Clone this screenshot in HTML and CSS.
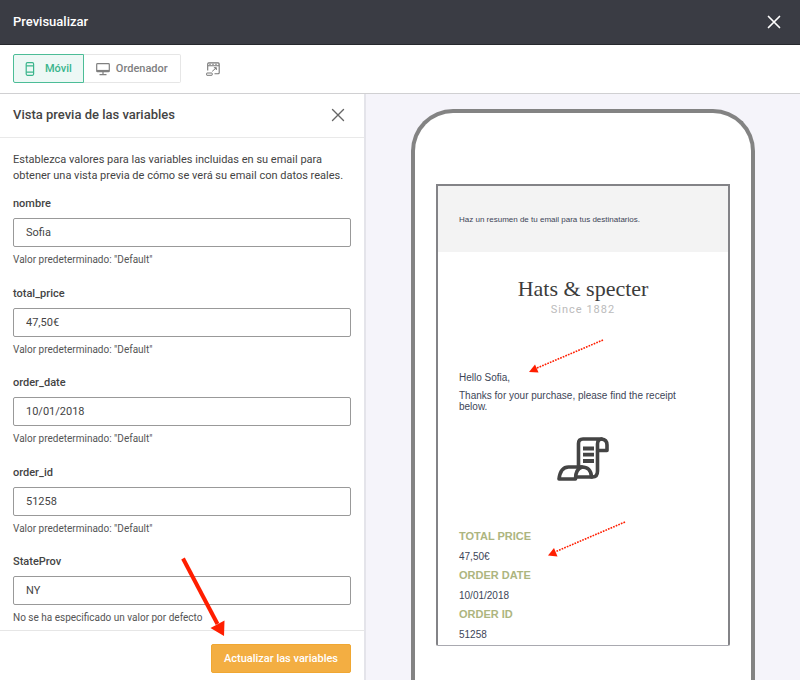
FILE: index.html
```html
<!DOCTYPE html>
<html lang="es">
<head>
<meta charset="utf-8">
<meta name="viewport" content="width=device-width, initial-scale=1">
<title>Previsualizar</title>
<link rel="stylesheet" href="styles.css">
</head>
<body>
<header class="topbar">
  <h1 class="title">Previsualizar</h1>
  <button class="close" type="button" aria-label="Cerrar">
    <svg width="14" height="14" viewBox="0 0 14 14"><path d="M1.500 1.500 12.500 12.500M12.500 1.500 1.500 12.500" fill="none" stroke="currentColor" stroke-width="1.700" stroke-linecap="round"/></svg>
  </button>
</header>

<nav class="toolbar">
  <div class="switch">
    <button class="tab tab-active" type="button">
      <svg width="10" height="14" viewBox="0 0 10 14"><g fill="none" stroke="currentColor" stroke-width="1.200"><rect x="1.200" y=".7" width="7.400" height="12.600" rx="1.200"/><path d="M1.200 3.800h7.400M1.200 10.200h7.400"/></g></svg>
      <span>Móvil</span>
    </button>
    <button class="tab" type="button">
      <svg width="14" height="14" viewBox="0 0 14 14"><g fill="none" stroke="currentColor"><rect x=".7" y="1.700" width="12.600" height="8" rx=".8" stroke-width="1.200"/><path d="M1 8.700h12" stroke-width="1.600"/><path d="M7 9.700v2.500M3.500 12.600h7" stroke-width="1.200"/></g></svg>
      <span>Ordenador</span>
    </button>
  </div>
  <button class="tool" type="button" aria-label="Abrir en otra ventana">
    <svg width="14" height="14" viewBox="0 0 14 14"><g fill="none" stroke="currentColor"><path d="M1.700 8.600V1.900Q1.700.9 2.700.9H12.200Q13.200.9 13.200 1.900V10.700Q13.200 11.700 12.200 11.700H8.500M1.700 3.700h11.500" stroke-width="1.100"/><path d="M3 2.300h9.500" stroke-width="1.200" stroke-dasharray="2 1" opacity=".6"/><path d="M6.200 9.400 10.200 5.800M7.900 5.700h2.400v2.300"/><rect x=".6" y="11" width="5.600" height="2.300" rx=".4"/></g></svg>
  </button>
</nav>

<main class="main">
  <section class="panel">
    <header class="panel-head">
      <h2 class="title">Vista previa de las variables</h2>
      <button class="close close-dark" type="button" aria-label="Cerrar panel">
        <svg width="14" height="14" viewBox="0 0 14 14"><path d="M1.500 1.500 12.500 12.500M12.500 1.500 1.500 12.500" fill="none" stroke="currentColor" stroke-width="1.400" stroke-linecap="round"/></svg>
      </button>
    </header>
    <form class="form" id="variables">
      <p class="intro">Establezca valores para las variables incluidas en su email para obtener una vista previa de cómo se verá su email con datos reales.</p>
      <div class="field">
        <label for="nombre">nombre</label>
        <input id="nombre" type="text" value="Sofia">
        <small>Valor predeterminado: "Default"</small>
      </div>
      <div class="field">
        <label for="total_price">total_price</label>
        <input id="total_price" type="text" value="47,50€">
        <small>Valor predeterminado: "Default"</small>
      </div>
      <div class="field">
        <label for="order_date">order_date</label>
        <input id="order_date" type="text" value="10/01/2018">
        <small>Valor predeterminado: "Default"</small>
      </div>
      <div class="field">
        <label for="order_id">order_id</label>
        <input id="order_id" type="text" value="51258">
        <small>Valor predeterminado: "Default"</small>
      </div>
      <div class="field">
        <label for="state">StateProv</label>
        <input id="state" type="text" value="NY">
        <small>No se ha especificado un valor por defecto</small>
      </div>
    </form>
    <footer class="panel-foot">
      <button class="submit" type="submit" form="variables">Actualizar las variables</button>
      <svg class="arrow arrow-button" width="50" height="84" viewBox="0 0 50 84"><path d="M3 3.500 37.500 69" stroke="#ff1e00" stroke-width="4"/><path d="M44 81 30.500 73 44.500 65.500Z" fill="#ff1e00"/></svg>
    </footer>
  </section>

  <section class="preview">
    <div class="phone">
      <article class="screen">
        <p class="summary">Haz un resumen de tu email para tus destinatarios.</p>
        <div class="brand">
          <h3>Hats &amp; specter</h3>
          <p>Since 1882</p>
        </div>
        <div class="message">
          <p>Hello Sofia,</p>
          <p>Thanks for your purchase, please find the receipt below.</p>
          <svg class="arrow arrow-hello" width="78" height="38" viewBox="0 0 78 38"><path d="M75 2 9 30" stroke="#ff1e00" stroke-width="1.600" stroke-dasharray="1.700 1.100"/><path d="M1 34 7 26.500 10.500 34.500Z" fill="#ff1e00"/></svg>
        </div>
        <svg class="receipt" width="52" height="44" viewBox="0 0 52 44">
          <g fill="none" stroke="#444" stroke-width="3.600" stroke-linejoin="round" stroke-linecap="round">
            <path d="M21.500 29V6.500Q21.500 2 26 2H44.500Q40.500 2.500 40.500 7V34Q40.500 40 35.500 40H20"/>
            <path d="M44.500 2Q50 2.500 50 8V13.500H41"/>
            <path d="M2 42Q3.500 30 11.500 30H25Q18.500 32 18.500 42Z"/>
            <path d="M24 30Q34 29.500 34.500 40"/>
          </g>
          <path d="M26 11.500h11M26 17.700h11M26 24h11" stroke="#444" stroke-width="3.800"/>
        </svg>
        <dl class="order">
          <dt>TOTAL PRICE</dt><dd>47,50€</dd>
          <dt>ORDER DATE</dt><dd>10/01/2018</dd>
          <dt>ORDER ID</dt><dd>51258</dd>
        </dl>
        <svg class="arrow arrow-price" width="80" height="38" viewBox="0 0 80 38"><path d="M78 1 9 30.500" stroke="#ff1e00" stroke-width="1.600" stroke-dasharray="1.700 1.100"/><path d="M1 34.500 7 27 10.500 35.500Z" fill="#ff1e00"/></svg>
      </article>
    </div>
  </section>
</main>
</body>
</html>
```
FILE: styles.css
```css
* { box-sizing: border-box; }

body {
  margin: 0;
  height: 100vh;
  display: flex;
  flex-direction: column;
  overflow: hidden;
  background: #fff;
  color: #444;
  font-family: Roboto, sans-serif;
  font-size: 11px;
  line-height: 16px;
}

h1, h2, h3, p, dl, dd { margin: 0; }

button, input { font: inherit; }

svg { display: block; flex: none; }

.title {
  font-size: 13px;
  font-weight: 500;
}

.topbar {
  display: flex;
  align-items: center;
  justify-content: space-between;
  padding: 14px 19px 14px 13px;
  background: #3a3c44;
  border-bottom: 1px solid #26282d;
  color: #fff;
}

.close {
  padding: 0;
  border: 0;
  background: none;
  color: inherit;
}

.close-dark { color: #666; }

.toolbar {
  display: flex;
  align-items: center;
  gap: 25px;
  padding: 9px 13px 10px;
  border-bottom: 1px solid #d0d0d2;
}

.switch { display: flex; }

.tab {
  display: flex;
  align-items: center;
  gap: 6px;
  height: 29px;
  padding: 0 12px;
  border: 1px solid #e6e6e6;
  border-left: 0;
  border-radius: 0 2px 2px 0;
  background: #fff;
  color: #808080;
  font-weight: 500;
}

.tab-active {
  gap: 10px;
  padding: 0 11px;
  border: 1px solid #4cbd97;
  border-radius: 2px 0 0 2px;
  background: #edf8f5;
  color: #3ab58c;
}

.tool {
  padding: 0;
  border: 0;
  background: none;
  color: #777;
}

.main {
  flex: 1;
  display: flex;
  min-height: 0;
}

.panel {
  flex: 0 0 366px;
  display: flex;
  flex-direction: column;
  border-right: 2px solid #e4e4ea;
}

.panel-head {
  display: flex;
  align-items: center;
  justify-content: space-between;
  padding: 13px 19px 14px 13px;
  border-bottom: 1px solid #e9e9e9;
}

.form {
  flex: 1;
  display: flex;
  flex-direction: column;
  justify-content: space-between;
  padding: 14px 13px 4px;
  min-height: 0;
}

.intro { margin-bottom: -5px; }

.field {
  display: flex;
  flex-direction: column;
}

.field label { font-weight: 500; }

.field input {
  width: 100%;
  height: 29px;
  margin: 6px 0 5px;
  padding: 0 12px;
  border: 1px solid #999;
  border-radius: 2px;
  background: #fff;
  color: #444;
}

.field small {
  font-size: 10px;
  color: #555;
}

.panel-foot {
  position: relative;
  display: flex;
  justify-content: flex-end;
  padding: 13px 13px 7px;
  border-top: 1px solid #e6e6e6;
}

.submit {
  height: 29px;
  padding: 0 12px;
  border: 1px solid #f0a732;
  border-radius: 2px;
  background: #f3ae42;
  color: #fff;
  font-weight: 500;
}

.arrow {
  position: absolute;
  pointer-events: none;
}

.arrow-button { right: 134px; top: -76px; }

.preview {
  flex: 1;
  display: flex;
  justify-content: center;
  align-items: stretch;
  padding-top: 15px;
  background: #f5f4fa;
}

.phone {
  width: 344px;
  padding: 71px 21px 35px;
  border: 4px solid #838383;
  border-bottom: 0;
  border-radius: 42px 42px 0 0;
  background: #fff;
}

.screen {
  position: relative;
  border: 2px solid #838387;
  border-bottom: 1px solid #a9a9b0;
  border-radius: 0 0 2px 2px;
  font-family: "Liberation Sans", Arial, sans-serif;
  font-size: 10px;
  color: #3d4557;
}

.summary {
  padding: 26px 21px 24px;
  background: #f3f3f3;
  font-size: 8px;
}

.brand {
  padding-top: 24px;
  text-align: center;
}

.brand h3 {
  font-family: "Liberation Serif", "Times New Roman", serif;
  font-size: 22px;
  line-height: 26px;
  font-weight: 400;
  color: #3c3c3c;
}

.brand p {
  font-family: Roboto, sans-serif;
  font-size: 11px;
  letter-spacing: 1px;
  color: #bbb;
}

.message {
  position: relative;
  padding: 54px 40px 0 21px;
  line-height: 11px;
}

.message p + p { margin-top: 7px; }

.arrow-hello { left: 90px; top: 20px; }

.receipt { margin: 25px auto 0; }

.order { padding: 47px 21px 0; }

.order dt {
  font-size: 11px;
  line-height: 16px;
  font-weight: 700;
  color: #adb57f;
}

.order dd {
  padding: 5px 0 2px;
  line-height: 16px;
}

.arrow-price { left: 109px; bottom: 86px; }
```
